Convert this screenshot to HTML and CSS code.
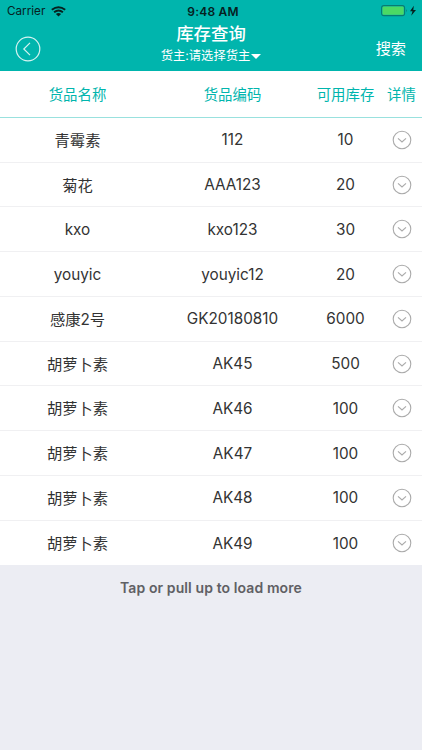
FILE: index.html
```
<!DOCTYPE html>
<html lang="zh-CN">
<head>
  <meta charset="UTF-8">
  <title>库存查询</title>
  <link rel="stylesheet" href="styles.css">
</head>
<body>
  <svg class="symbols" width="0" height="0">
    <symbol id="detail" viewBox="0 0 20 20">
      <circle cx="10" cy="10" r="8.8"/>
      <path d="M6 8.3l4 3.7 4-3.7"/>
    </symbol>
  </svg>

  <header class="header">
    <div class="status">
      <div class="carrier">
        <span>Carrier</span>
        <svg width="15" height="11" viewBox="0 0 15 11">
          <path d="M.8 3.8Q7.5-1.5 14.2 3.8M3.1 6.3Q7.5 2.7 11.9 6.3" fill="none" stroke="#06211f" stroke-width="1.9"/>
          <path d="M4.9 8Q7.5 5.9 10.1 8L7.5 10.6z" fill="#06211f"/>
        </svg>
      </div>
      <div class="time">9:48 AM</div>
      <div class="battery">
        <svg width="36" height="12" viewBox="0 0 36 12">
          <rect x=".6" y=".6" width="23" height="10" rx="2.4" fill="none" stroke="#087b73" stroke-width="1.1"/>
          <rect x="1.5" y="1.5" width="21.2" height="8.2" rx="1.2" fill="#4cd964"/>
          <path d="M25 3.9q1.5 1.7 0 3.4z" fill="#087b73"/>
          <path d="M32.8.8L29 6.3h2.5L30.2 10.7 35 4.9h-2.7z" fill="#06211f"/>
        </svg>
      </div>
    </div>
    <div class="nav">
      <div class="back">
        <svg width="26" height="26" viewBox="0 0 26 26">
          <circle cx="13" cy="13" r="11.8"/>
          <path d="M15 6.8L8.8 13l6.2 6.2"/>
        </svg>
      </div>
      <div class="heading">
        <h1>库存查询</h1>
        <div class="owner">货主:请选择货主<i class="caret"></i></div>
      </div>
      <div class="search">搜索</div>
    </div>
  </header>

  <div class="row row-head"><span>货品名称</span><span>货品编码</span><span>可用库存</span><span>详情</span></div>
  <div class="list">
    <div class="row"><span class="zh">青霉素</span><span>112</span><span>10</span><svg class="detail"><use href="#detail"/></svg></div>
    <div class="row"><span class="zh">菊花</span><span>AAA123</span><span>20</span><svg class="detail"><use href="#detail"/></svg></div>
    <div class="row"><span>kxo</span><span>kxo123</span><span>30</span><svg class="detail"><use href="#detail"/></svg></div>
    <div class="row"><span>youyic</span><span>youyic12</span><span>20</span><svg class="detail"><use href="#detail"/></svg></div>
    <div class="row"><span class="zh">感康2号</span><span>GK20180810</span><span>6000</span><svg class="detail"><use href="#detail"/></svg></div>
    <div class="row"><span class="zh">胡萝卜素</span><span>AK45</span><span>500</span><svg class="detail"><use href="#detail"/></svg></div>
    <div class="row"><span class="zh">胡萝卜素</span><span>AK46</span><span>100</span><svg class="detail"><use href="#detail"/></svg></div>
    <div class="row"><span class="zh">胡萝卜素</span><span>AK47</span><span>100</span><svg class="detail"><use href="#detail"/></svg></div>
    <div class="row"><span class="zh">胡萝卜素</span><span>AK48</span><span>100</span><svg class="detail"><use href="#detail"/></svg></div>
    <div class="row"><span class="zh">胡萝卜素</span><span>AK49</span><span>100</span><svg class="detail"><use href="#detail"/></svg></div>
  </div>
  <div class="more">Tap or pull up to load more</div>
</body>
</html>
```
FILE: styles.css
```
* {
  box-sizing: border-box;
}
body {
  margin: 0;
  height: 750px;
  overflow: hidden;
  background: #ecedf3;
  color: #333;
  font-family: Inter, "Noto Sans CJK SC", sans-serif;
}
.symbols {
  display: block;
}
.header {
  height: 71.2px;
  background: #00b5ad;
  color: #fff;
}
.status {
  display: grid;
  grid-template-columns: 1fr auto 1fr;
  align-items: center;
  height: 22px;
  padding: 0 5px 0 7px;
  color: #06211f;
  font-size: 12px;
}
.carrier {
  display: flex;
  align-items: center;
  gap: 6px;
}
.carrier span {
  font-size: 11.7px;
}
.time {
  padding-left: 2px;
  font-weight: 600;
  letter-spacing: 0.2px;
}
.battery {
  display: flex;
  justify-content: flex-end;
}
.nav {
  display: grid;
  grid-template-columns: 100px 1fr 100px;
  height: 49px;
}
.back {
  padding: 14px 0 0 15px;
}
.back svg {
  display: block;
  fill: none;
  stroke: #d5f3f1;
  stroke-width: 1.2;
}
.heading {
  text-align: center;
}
h1 {
  margin: 0;
  font-size: 17.4px;
  font-weight: 500;
  line-height: 24px;
}
.owner {
  display: flex;
  align-items: center;
  justify-content: center;
  font-size: 12.3px;
  line-height: 20px;
}
.caret {
  margin-left: 1px;
  border: 5px solid transparent;
  border-top-color: #fff;
  border-bottom: 0;
}
.search {
  padding: 16px 16px 0 0;
  font-size: 15.2px;
  line-height: 22px;
  text-align: right;
}
.row {
  display: grid;
  grid-template-columns: 155px 155px 71px 1fr;
  align-items: center;
  justify-items: center;
  height: 44.75px;
  padding-top: 0.5px;
  background: #fff;
  border-bottom: 1px solid #f0f0f2;
  font-size: 15.3px;
}
.row-head {
  height: 46.6px;
  padding-bottom: 1px;
  border-bottom-color: #99e1de;
  color: #00b5ad;
  font-size: 14.4px;
}
.list .row:last-child {
  border-bottom: 0;
}
.zh {
  padding-bottom: 2px;
}
.detail {
  display: block;
  width: 20px;
  height: 20px;
  fill: none;
  stroke: #aaa;
  stroke-width: 1.1;
}
.more {
  padding-top: 13px;
  color: #606064;
  font-size: 14px;
  font-weight: 600;
  letter-spacing: 0.1px;
  line-height: 20px;
  text-align: center;
}
```
